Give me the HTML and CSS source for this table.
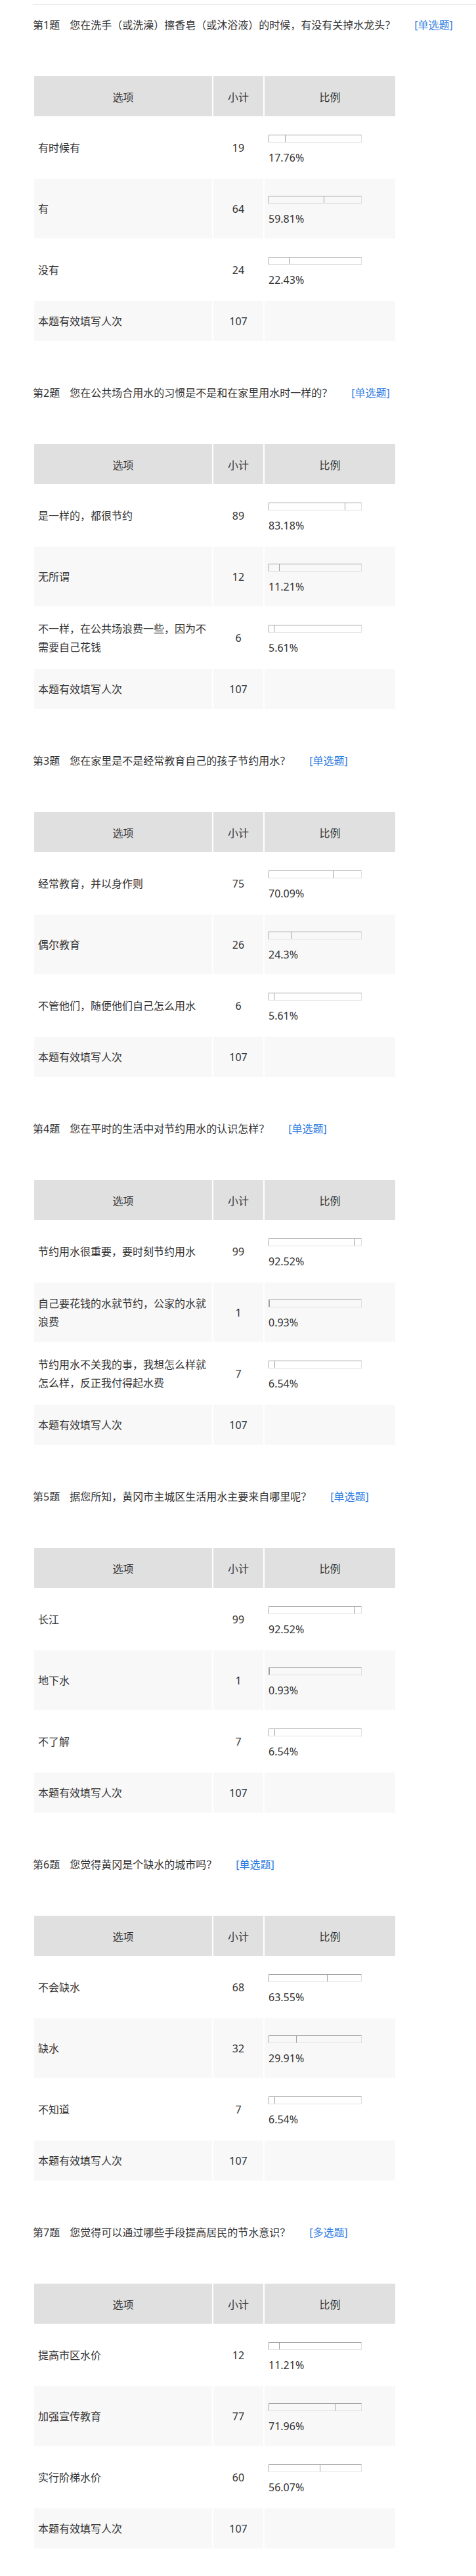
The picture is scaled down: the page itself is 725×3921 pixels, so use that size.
FILE: index.html
```html
<!DOCTYPE html>
<html lang="zh-CN">
<head>
    <meta charset="UTF-8">
    <meta name="viewport" content="width=device-width, initial-scale=1.0">
    <title>节约用水调查 - 统计结果</title>
    <link rel="stylesheet" href="styles.css">
</head>
<body>
    <div class="report" id="report">
        <!-- Questions are rendered here -->
    </div>

    <script>
        const questions = [
            {
                title: '您在洗手（或洗澡）擦香皂（或沐浴液）的时候，有没有关掉水龙头？',
                type: '单选题',
                options: [['有时候有', 19, '17.76%'], ['有', 64, '59.81%'], ['没有', 24, '22.43%']]
            },
            {
                title: '您在公共场合用水的习惯是不是和在家里用水时一样的？',
                type: '单选题',
                options: [['是一样的，都很节约', 89, '83.18%'], ['无所谓', 12, '11.21%'], ['不一样，在公共场浪费一些，因为不需要自己花钱', 6, '5.61%']]
            },
            {
                title: '您在家里是不是经常教育自己的孩子节约用水？',
                type: '单选题',
                options: [['经常教育，并以身作则', 75, '70.09%'], ['偶尔教育', 26, '24.3%'], ['不管他们，随便他们自己怎么用水', 6, '5.61%']]
            },
            {
                title: '您在平时的生活中对节约用水的认识怎样？',
                type: '单选题',
                options: [['节约用水很重要，要时刻节约用水', 99, '92.52%'], ['自己要花钱的水就节约，公家的水就浪费', 1, '0.93%'], ['节约用水不关我的事，我想怎么样就怎么样，反正我付得起水费', 7, '6.54%']]
            },
            {
                title: '据您所知，黄冈市主城区生活用水主要来自哪里呢？',
                type: '单选题',
                options: [['长江', 99, '92.52%'], ['地下水', 1, '0.93%'], ['不了解', 7, '6.54%']]
            },
            {
                title: '您觉得黄冈是个缺水的城市吗？',
                type: '单选题',
                options: [['不会缺水', 68, '63.55%'], ['缺水', 32, '29.91%'], ['不知道', 7, '6.54%']]
            },
            {
                title: '您觉得可以通过哪些手段提高居民的节水意识？',
                type: '多选题',
                options: [['提高市区水价', 12, '11.21%'], ['加强宣传教育', 77, '71.96%'], ['实行阶梯水价', 60, '56.07%']]
            }
        ];

        const report = document.getElementById('report');

        questions.forEach(function(q, i) {
            let rows = '';
            q.options.forEach(function(opt) {
                rows += '<tr>' +
                    '<td class="cell-option">' + opt[0] + '</td>' +
                    '<td class="cell-count">' + opt[1] + '</td>' +
                    '<td class="cell-ratio"><div class="ratio">' +
                        '<div class="bar"><div class="bar-fill" style="width:' + parseFloat(opt[2]) + '%"></div></div>' +
                        '<div class="percent">' + opt[2] + '</div>' +
                    '</div></td>' +
                '</tr>';
            });

            const block = document.createElement('div');
            block.className = 'question';
            block.innerHTML =
                '<div class="question-title">' +
                    '<span class="q-no">第' + (i + 1) + '题</span>' +
                    '<span class="q-text">' + q.title + '</span>' +
                    '<span class="q-type">[' + q.type + ']</span>' +
                '</div>' +
                '<table class="stat-table">' +
                    '<colgroup><col class="col-option"><col class="col-count"><col class="col-ratio"></colgroup>' +
                    '<thead><tr><th>选项</th><th>小计</th><th>比例</th></tr></thead>' +
                    '<tbody>' + rows +
                        '<tr class="total-row"><td class="cell-option">本题有效填写人次</td><td class="cell-count">107</td><td></td></tr>' +
                    '</tbody>' +
                '</table>';
            report.appendChild(block);
        });
    </script>
</body>
</html>
```

FILE: styles.css
```css
body {
    margin: 0;
    font-family: "Noto Sans", "Noto Sans CJK SC", sans-serif;
    font-size: 16px;
    color: #333;
    background-color: #fff;
}
.report {
    margin: 6px 0 0 50px;
    border-top: 1px solid #e2e2e2;
    padding: 17px 0 40px;
    display: flex;
    flex-direction: column;
    gap: 63px;
}
.question-title {
    line-height: 28px;
    margin-bottom: 62px;
    white-space: nowrap;
}
.q-no {
    margin-right: 15px;
}
.q-type {
    color: #2a7ae2;
    margin-left: 29px;
}
.stat-table {
    border-collapse: separate;
    border-spacing: 2px;
    table-layout: fixed;
    width: 554px;
}
.col-option {
    width: 271px;
}
.col-count {
    width: 76px;
}
.col-ratio {
    width: 199px;
}
.stat-table th,
.stat-table td {
    padding: 0 6px;
    font-weight: normal;
}
.stat-table th {
    height: 61px;
    background-color: #e0e0e0;
    text-align: center;
}
.stat-table td {
    height: 91px;
    line-height: 28px;
    vertical-align: middle;
}
.stat-table tbody tr:nth-child(even) td {
    background-color: #f8f8f8;
}
.stat-table .total-row td {
    height: 61px;
    background-color: #e0e0e0;
}
.cell-count {
    text-align: center;
}
.cell-ratio {
    padding-left: 7px;
}
.ratio {
    padding-top: 8px;
}
.bar {
    width: 142px;
    height: 12px;
    box-sizing: border-box;
    border: 1px solid;
    border-color: #a0a0a0 #e0e0e0 #e0e0e0 #a0a0a0;
    margin-bottom: 11px;
}
.bar-fill {
    height: 100%;
    box-sizing: border-box;
    border-right: 1px solid #a0a0a0;
}
.percent {
    line-height: 24px;
}
```
